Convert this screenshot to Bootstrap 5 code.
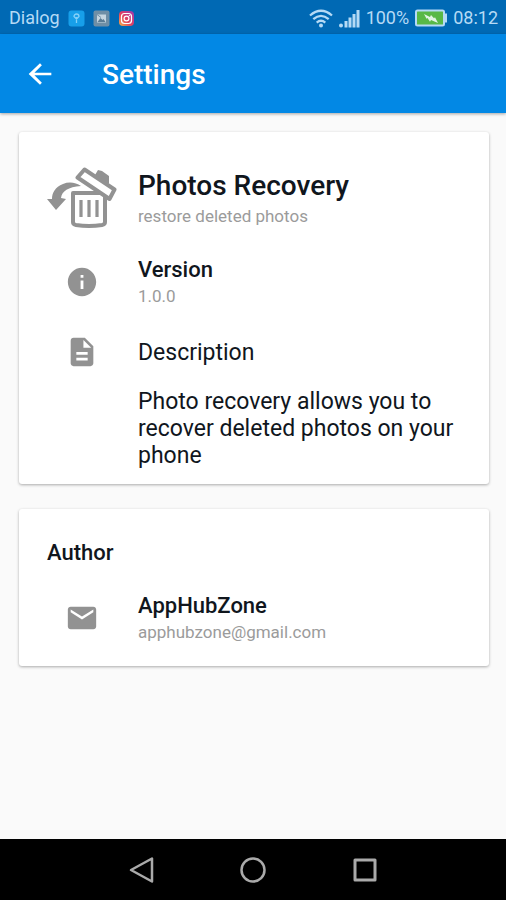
<!DOCTYPE html>
<html lang="en">
<head>
<meta charset="utf-8">
<meta name="viewport" content="width=device-width, initial-scale=1">
<title>Settings</title>
<link href="https://cdn.jsdelivr.net/npm/bootstrap@5.3.0/dist/css/bootstrap.min.css" rel="stylesheet">
<style>
body { font-family: Roboto, "Liberation Sans", sans-serif; background: #fafafa; color: #10161d; }
.status-bar { background: #0069b4; color: #b5daf5; height: 34px; padding: 2px 8px 0 9px; font-size: 18px; line-height: 28px; }
.status-side { gap: 6px; }
.app-bar { background: #0288e5; height: 79px; padding: 0 24px; box-shadow: 0 1px 3px rgba(0,0,0,.35); }
.back-btn { width: 32px; height: 32px; margin-right: 46px; }
.app-title { font-size: 28px; line-height: 36px; font-weight: 500; padding-top: 2px; }
.content { padding: 19px 17px 19px 19px; gap: 25px; }
.panel { border: 0; border-radius: 3px; box-shadow: 0 1px 3px rgba(0,0,0,.32); padding: 0 28px; }
.about { padding-top: 35px; padding-bottom: 15px; }
.author { padding-top: 30px; padding-bottom: 22px; }
.entry { gap: 21px; margin-bottom: 27px; }
.entry-icon { width: 70px; }
.entry-title { font-size: 22px; line-height: 28px; font-weight: 500; }
.author-heading { margin-bottom: 25px; }
.app-name { font-size: 28px; line-height: 36px; font-weight: 500; }
.entry-sub { font-size: 17px; line-height: 24px; color: #9b9b9b; }
.entry-label { font-size: 23px; line-height: 27px; }
.body-text { font-size: 23px; line-height: 27px; padding-left: 91px; margin-top: -8px; }
.nav-keys { background: #000; height: 61px; gap: 80px; }
</style>
<script src="https://cdn.jsdelivr.net/npm/bootstrap@5.3.0/dist/js/bootstrap.bundle.min.js"></script>
</head>
<body class="d-flex flex-column min-vh-100">
<div class="status-bar d-flex align-items-center justify-content-between">
  <div class="d-flex align-items-center">
    <span class="me-2">Dialog</span>
    <svg class="me-2" width="17" height="17" viewBox="0 0 17 17" aria-hidden="true"><rect x=".5" y=".5" width="16" height="16" rx="3" fill="#179fe9"/><path d="M8.500 13V7M6 6.500a2.500 2.500 0 1 1 5 0L8.500 9z" fill="none" stroke="#83d0f8" stroke-width="1.300"/></svg>
    <svg class="me-2" width="17" height="17" viewBox="0 0 17 17" aria-hidden="true"><rect x=".5" y=".5" width="16" height="16" rx="2" fill="#6f8fa6"/><path d="M4 4.500h9v8H4z" fill="#c6d6e0"/><path d="M4.500 12l3-4 2 2 1-1 2 3z" fill="#5b7c94"/><path d="M4 4.500l4 3" stroke="#6f8fa6"/></svg>
    <svg width="17" height="17" viewBox="0 0 17 17" aria-hidden="true"><defs><linearGradient id="ig" x1="0" y1="1" x2="1" y2="0"><stop offset="0" stop-color="#f5b54a"/><stop offset=".45" stop-color="#e2405f"/><stop offset="1" stop-color="#9a3bb5"/></linearGradient></defs><rect x="1" y="1" width="15" height="15" rx="4" fill="url(#ig)"/><rect x="3.500" y="3.500" width="10" height="10" rx="3" fill="none" stroke="#fff" stroke-width="1.200"/><circle cx="8.500" cy="8.500" r="2.400" fill="none" stroke="#fff" stroke-width="1.200"/><circle cx="11.400" cy="5.600" r=".7" fill="#fff"/></svg>
  </div>
  <div class="status-side d-flex align-items-center">
    <svg width="24" height="19" viewBox="0 0 24 19" fill="none" stroke="#b5daf5" stroke-width="2.300" aria-label="Wi-Fi" role="img"><path d="M1 6.500Q12-3 23 6.500M4.300 10.200q7.700-6.700 15.400 0M7.700 13.600q4.300-3.600 8.600 0"/><circle cx="12" cy="16.500" r="2" fill="#b5daf5" stroke="none"/></svg>
    <svg width="21" height="19" viewBox="0 0 21 19" fill="#b5daf5" aria-label="Signal" role="img"><circle cx="2" cy="16.500" r="2"/><path d="M5.500 12h3v6.500h-3zM9.500 8.500h3v10h-3zM13.500 5h3v13.500h-3zM17.500 1h3v17.500h-3z"/></svg>
    <span>100%</span>
    <svg width="32" height="18" viewBox="1 0 32 18" aria-label="Battery charging" role="img"><rect x="2" y="1.500" width="28" height="15" rx="1.500" fill="#58b847" stroke="#b5daf5" stroke-width="2"/><path d="M31 4.500h2v9h-2z" fill="#b5daf5"/><path d="M10 5l6 3 1-2 3 3.200 1-1L24 14l-7-3-1 1.700L13.500 9l-1 .8z" fill="#e0f4e4"/></svg>
    <span>08:12</span>
  </div>
</div>
<header class="app-bar d-flex align-items-center">
  <button type="button" class="btn back-btn p-0 border-0 d-flex align-items-center justify-content-center" aria-label="Back"><svg width="32" height="32" viewBox="0 0 24 24" fill="#fff"><path d="M20.500 11H7.830l5.590-5.590L12 4l-8.500 8 8.500 8 1.410-1.410L7.830 13H20.500z"/></svg></button>
  <h1 class="app-title text-white m-0">Settings</h1>
</header>
<main class="content d-flex flex-column flex-grow-1">
  <section class="card panel about">
    <div class="entry d-flex align-items-center">
      <div class="entry-icon flex-shrink-0"><svg class="d-block" width="70" height="62" viewBox="0 1 70 62" aria-hidden="true"><path d="M26 27h32v29q0 2.500-3 3-13 1.800-26 0-3-.5-3-3z" fill="#fff" stroke="#929292" stroke-width="4" stroke-linejoin="round"/><path d="M34 34v17M42 34v17M50 34v17" stroke="#929292" stroke-width="3.200"/><path d="M48 9l3-5 4 1 7 5v7l-2 2zM0 33l9 11 10-11-5-1c1-7 7-11 20-12-5-3.500-12-4.500-18-2C8 21 5 27 5 33z" fill="#929292"/><path d="M37.500 3.500l30 20-5 9.500-32-21.500z" fill="#fff" stroke="#929292" stroke-width="4" stroke-linejoin="round"/></svg></div>
      <div><h2 class="app-name m-0">Photos Recovery</h2><div class="entry-sub">restore deleted photos</div></div>
    </div>
    <div class="entry d-flex align-items-center">
      <div class="entry-icon flex-shrink-0 d-flex justify-content-center"><svg width="34" height="34" viewBox="0 0 24 24" fill="#929292" aria-hidden="true"><path d="M12 2C6.480 2 2 6.480 2 12s4.480 10 10 10 10-4.480 10-10S17.520 2 12 2zm1 15h-2v-6h2v6zm0-8h-2V7h2v2z"/></svg></div>
      <div><h3 class="entry-title m-0">Version</h3><div class="entry-sub">1.0.0</div></div>
    </div>
    <div class="entry d-flex align-items-center">
      <div class="entry-icon flex-shrink-0 d-flex justify-content-center"><svg width="34" height="34" viewBox="0 0 24 24" fill="#929292" aria-hidden="true"><path d="M14 2H6c-1.100 0-1.990.9-1.990 2L4 20c0 1.100.89 2 1.990 2H18c1.100 0 2-.9 2-2V8l-6-6zm2 16H8v-2h8v2zm0-4H8v-2h8v2zm-3-5V3.500L18.500 9H13z"/></svg></div>
      <h3 class="entry-label fw-normal m-0">Description</h3>
    </div>
    <p class="body-text mb-0">Photo recovery allows you to recover deleted photos on your phone</p>
  </section>
  <section class="card panel author">
    <h2 class="entry-title author-heading">Author</h2>
    <div class="entry d-flex align-items-center mb-0">
      <div class="entry-icon flex-shrink-0 d-flex justify-content-center"><svg width="34" height="34" viewBox="0 0 24 24" fill="#929292" aria-hidden="true"><path d="M20 4H4c-1.100 0-1.990.9-1.990 2L2 18c0 1.100.9 2 2 2h16c1.100 0 2-.9 2-2V6c0-1.100-.9-2-2-2zm0 4l-8 5-8-5V6l8 5 8-5v2z"/></svg></div>
      <div><h3 class="entry-title m-0">AppHubZone</h3><a class="entry-sub d-block text-decoration-none" href="mailto:apphubzone@gmail.com">apphubzone@gmail.com</a></div>
    </div>
  </section>
</main>
<nav class="nav-keys d-flex align-items-center justify-content-center" aria-label="System navigation">
  <button type="button" class="btn p-0 border-0 d-flex" aria-label="Back"><svg width="32" height="32" viewBox="0 0 32 32" fill="none" stroke="#aaa" stroke-width="2.500" stroke-linejoin="round"><path d="M27 4.500v23L6 16z"/></svg></button>
  <button type="button" class="btn p-0 border-0 d-flex" aria-label="Home"><svg width="32" height="32" viewBox="0 0 32 32" fill="none" stroke="#aaa" stroke-width="2.500"><circle cx="16" cy="16" r="11.500"/></svg></button>
  <button type="button" class="btn p-0 border-0 d-flex" aria-label="Recent apps"><svg width="32" height="32" viewBox="0 0 32 32" fill="none" stroke="#aaa" stroke-width="3" stroke-linejoin="round"><path d="M6 6h20v20H6z"/></svg></button>
</nav>
</body>
</html>
